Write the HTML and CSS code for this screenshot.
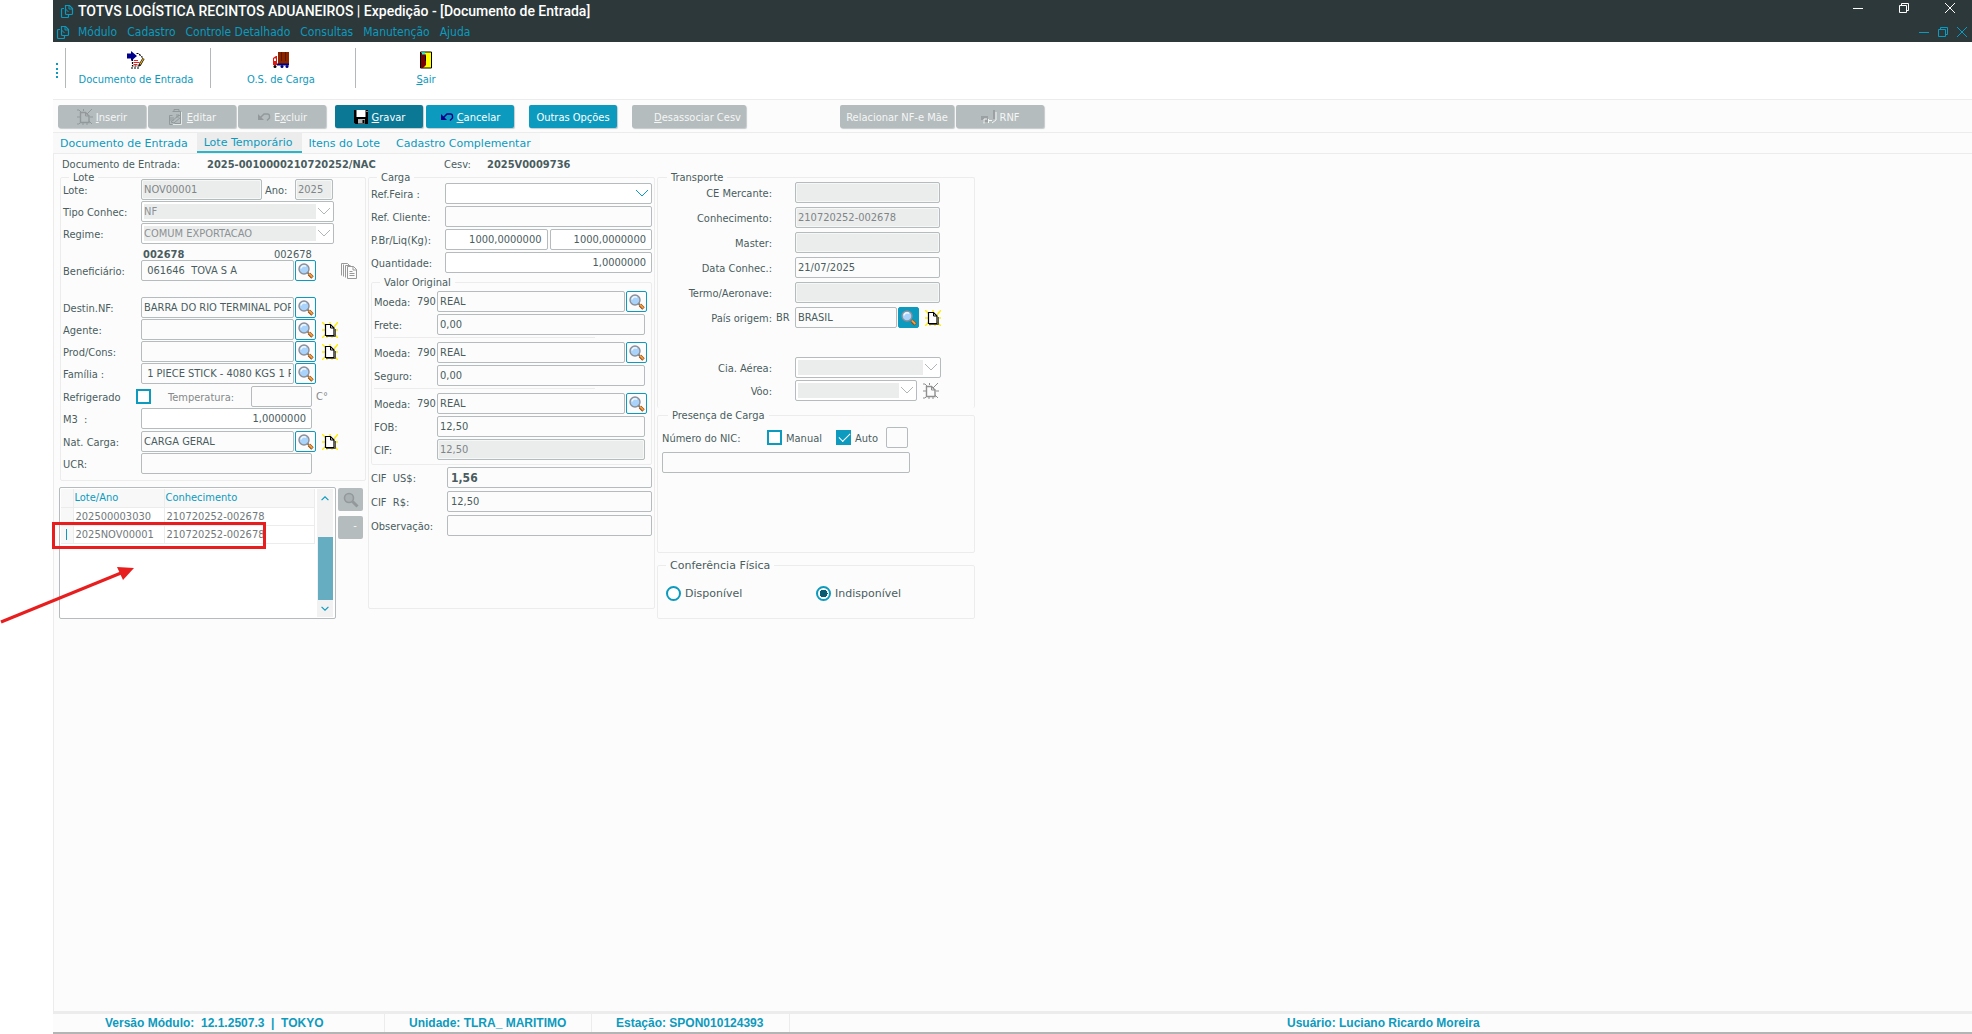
FILE: index.html
```html
<!DOCTYPE html>
<html lang="pt-BR">
<head>
    <meta charset="UTF-8">
    <meta name="viewport" content="width=device-width, initial-scale=1.0">
    <title>TOTVS Logística Recintos Aduaneiros</title>
    <link rel="stylesheet" href="styles.css">
</head>
<body>
    <!-- Icon set -->
    <svg class="icon-defs" width="0" height="0" aria-hidden="true">
        <symbol id="i-app" viewBox="0 0 14 14">
            <path d="M4 4.500H2.500a1 1 0 0 0-1 1v7a1 1 0 0 0 1 1h5a1 1 0 0 0 1-1V11" fill="none" stroke="currentColor" stroke-width="1.200"/>
            <path d="M5.500 1.500h4l3 3v5a1 1 0 0 1-1 1h-5a1 1 0 0 1-1-1z" fill="none" stroke="currentColor" stroke-width="1.200"/>
            <path d="M9 2v3h3M5.500 5l3 3" stroke="currentColor" fill="none"/>
        </symbol>
        <symbol id="i-search" viewBox="0 0 16 16">
            <path d="M9.500 9.500l2 2" stroke="#777" stroke-width="2"/>
            <path d="M11 11l3.500 3.500" stroke="#8a4a1c" stroke-width="3.400"/>
            <path d="M11 10.700l3.300 3.300" stroke="#f5a03c" stroke-width="1.800"/>
            <circle cx="6" cy="6" r="5" fill="#a9d3fa" stroke="#8b8f98" stroke-width="1.400"/>
            <path d="M3 5.500a3 3 0 0 1 5-2" stroke="#eef8ff" stroke-width="1.500" fill="none"/>
        </symbol>
        <symbol id="i-search-off" viewBox="0 0 16 16">
            <path d="M9.500 9.500l5 5" stroke="#93999a" stroke-width="3"/>
            <circle cx="6" cy="6" r="4.500" fill="#aab1b2" stroke="#93999a" stroke-width="1.600"/>
        </symbol>
        <symbol id="i-new" viewBox="0 0 16 16">
            <path d="M0 0l4 4M8 0v3M16 0l-4 5M0 8h4M16 8h-4M0 16l4-4M16 16l-4-4M5 13v3M10 13v3" stroke="#ffee00" stroke-width="1.500"/>
            <path d="M4 14.500h9.500V7" stroke="#555" fill="none"/>
            <path d="M3.500 2.500h5l3.500 3.500v7.500H3.500z" fill="#fff" stroke="#000" stroke-width="1.200"/>
            <path d="M8.500 2.500v3.500H12" fill="none" stroke="#000"/>
        </symbol>
        <symbol id="i-new-off" viewBox="0 0 16 16">
            <path d="M0 1h2l2 2M6.500 0v2M15 0l-5 5M0 8h3M13 8h3M0 15h2l2-2M15 15l-3-3M6 13v3M10 13v3" stroke="currentColor" fill="none"/>
            <path d="M3.500 3.500h5l3.500 3.500v6.500H3.500z" fill="none" stroke="currentColor" stroke-width="1.400"/>
            <path d="M8.500 3v4h4" fill="none" stroke="currentColor"/>
        </symbol>
        <symbol id="i-copy" viewBox="0 0 16 16">
            <path d="M.5 12.500V.5h6l1.500 1.500M2.500 13.500v-12M4.500 14.500v-12h5" fill="none" stroke="#999"/>
            <path d="M6.500 3.500h6l3 3v9h-9z" fill="#fcfcfc" stroke="#999"/>
            <path d="M12 3.500V7h3.500M8.500 8.500h3M8.500 10.500h5M8.500 12.500h5" fill="none" stroke="#999"/>
        </symbol>
        <symbol id="i-edit" viewBox="0 0 16 16">
            <path d="M4.500 15.500h-3v-9h3M4.500 2.500h8v12h-6M6 2V.5h5V2" fill="none" stroke="currentColor"/>
            <path d="M2 9h4M2 11h4M8 6h3M8 8h3M3 13l8-7 2 2-7 6z" fill="none" stroke="currentColor"/>
            <path d="M13.500 3v12.500H5" fill="none" stroke="#e6e9e9"/>
        </symbol>
        <symbol id="i-undo" viewBox="0 0 14 10">
            <path d="M1 2v6h6z" fill="currentColor"/>
            <path d="M3 6l4-4h3a2 2 0 0 1 2.500 2v2L10 8.500" fill="none" stroke="currentColor" stroke-width="1.400"/>
        </symbol>
        <symbol id="i-save" viewBox="0 0 16 16">
            <path d="M1 1h14v14H2.500L1 13.500z" fill="#000"/>
            <path d="M3.500 1h9v7h-9z" fill="#fff"/>
            <path d="M5 10h7v4.500H5z" fill="#b5b5b5"/>
            <path d="M9.500 11h2v3h-2z" fill="#000"/>
            <path d="M13.500 2h1v1h-1z" fill="#fff"/>
        </symbol>
        <symbol id="i-rnf" viewBox="0 0 16 14">
            <path d="M0 6h7v6H2v-2H0z" fill="#9ba1a2"/>
            <path d="M12 0h2v9h-2z" fill="#9ba1a2"/>
            <path d="M3 13.500V9h3M7.500 13V9M7 10.500h4M11 13l4-3V2" fill="none" stroke="#f4f5f5"/>
        </symbol>
        <symbol id="i-doc" viewBox="0 0 18 18">
            <path d="M5.500 3.500h6l4 4v7l-2 1.500h-8z" fill="#fff"/>
            <path d="M9.500 2.500h2l4 4M5.500 8v7h7M12 15l1-3M4 17h9" fill="none" stroke="#000" stroke-width="1.200" stroke-dasharray="2 1"/>
            <path d="M7 9.500h4M6.500 11.500h6M6.500 13.500h4" stroke="#e22"/>
            <path d="M16.500 7.500l-4 7" stroke="#000" stroke-width="2.400"/>
            <path d="M16.500 7.500l-3.500 6" stroke="#e8b020" stroke-width="1.200"/>
            <path d="M0 2.500h4V0l6 5-6 5V7.500H0z" fill="#00008b"/>
        </symbol>
        <symbol id="i-truck" viewBox="0 0 18 18">
            <path d="M6 1h11v12H6z" fill="#8b2500"/>
            <path d="M9.500 1v9M13.500 1v9" stroke="#5c1500"/>
            <path d="M1 7l3-2h1v9H1z" fill="#e8140c"/>
            <path d="M2 7.500h2v2.500H2z" fill="#fff"/>
            <path d="M5 13.500h12" stroke="#000080" stroke-width="2"/>
            <circle cx="3" cy="15.500" r="1.500" fill="#000"/>
            <circle cx="10" cy="15.500" r="1.500" fill="#000080"/>
            <circle cx="15" cy="15.500" r="1.500" fill="#000080"/>
        </symbol>
        <symbol id="i-door" viewBox="0 0 14 18">
            <path d="M1.500 1h11v16h-11z" fill="#ff0" stroke="#000"/>
            <path d="M2 2h3l2 2v10l-3 3H2z" fill="#7b0000"/>
            <path d="M3 1.500h3v2H3z" fill="#0ff"/>
            <path d="M6.500 5v5" stroke="#000"/>
        </symbol>
        <symbol id="i-min" viewBox="0 0 12 12"><path d="M1 6.500h10" stroke="currentColor" fill="none"/></symbol>
        <symbol id="i-max" viewBox="0 0 12 12"><path d="M1.500 3.500h7v7h-7zM3.500 3.500v-2h7v7h-2" stroke="currentColor" fill="none"/></symbol>
        <symbol id="i-close" viewBox="0 0 12 12"><path d="M1 1l10 10M11 1L1 11" stroke="currentColor" fill="none"/></symbol>
        <symbol id="i-chevron" viewBox="0 0 14 8"><path d="M1 1l6 6 6-6" stroke="currentColor" fill="none"/></symbol>
    </svg>

    <div class="window">
        <header class="titlebar">
            <div class="title-row">
                <svg class="app-icon"><use href="#i-app"/></svg>
                <h1>TOTVS LOGÍSTICA RECINTOS ADUANEIROS | Expedição - [Documento de Entrada]</h1>
                <div class="win-buttons">
                    <button type="button" aria-label="Minimizar"><svg><use href="#i-min"/></svg></button>
                    <button type="button" aria-label="Restaurar"><svg><use href="#i-max"/></svg></button>
                    <button type="button" aria-label="Fechar"><svg><use href="#i-close"/></svg></button>
                </div>
            </div>
            <nav class="menu-row">
                <svg class="app-icon"><use href="#i-app"/></svg>
                <a href="#">Módulo</a>
                <a href="#">Cadastro</a>
                <a href="#">Controle Detalhado</a>
                <a href="#">Consultas</a>
                <a href="#">Manutenção</a>
                <a href="#">Ajuda</a>
                <div class="child-buttons">
                    <button type="button" aria-label="Minimizar janela"><svg><use href="#i-min"/></svg></button>
                    <button type="button" aria-label="Restaurar janela"><svg><use href="#i-max"/></svg></button>
                    <button type="button" aria-label="Fechar janela"><svg><use href="#i-close"/></svg></button>
                </div>
            </nav>
        </header>

        <div class="toolbar">
            <span class="grip"></span>
            <button type="button" class="tool"><svg><use href="#i-doc"/></svg>Documento de Entrada</button>
            <button type="button" class="tool"><svg><use href="#i-truck"/></svg>O.S. de Carga</button>
            <button type="button" class="tool"><svg><use href="#i-door"/></svg><span><u>S</u>air</span></button>
        </div>

        <div class="actions">
            <button type="button" class="btn" disabled><svg class="off"><use href="#i-new-off"/></svg><span><u>I</u>nserir</span></button>
            <button type="button" class="btn" disabled><svg class="off"><use href="#i-edit"/></svg><span><u>E</u>ditar</span></button>
            <button type="button" class="btn gap-l" disabled><svg class="off undo"><use href="#i-undo"/></svg><span>E<u>x</u>cluir</span></button>
            <button type="button" class="btn primary"><svg><use href="#i-save"/></svg><span><u>G</u>ravar</span></button>
            <button type="button" class="btn gap-xl"><svg class="undo navy"><use href="#i-undo"/></svg><span><u>C</u>ancelar</span></button>
            <button type="button" class="btn gap-xl">Outras Opções</button>
            <button type="button" class="btn wide indent" disabled><span><u>D</u>esassociar Cesv</span></button>
            <button type="button" class="btn wide far" disabled>Relacionar NF-e Mãe</button>
            <button type="button" class="btn" disabled><svg><use href="#i-rnf"/></svg>RNF</button>
        </div>

        <nav class="tabs">
            <a href="#">Documento de Entrada</a>
            <a href="#" class="active">Lote Temporário</a>
            <a href="#">Itens do Lote</a>
            <a href="#">Cadastro Complementar</a>
        </nav>

        <main class="page">
            <div class="doc-line">
                <span class="doc-label">Documento de Entrada:</span>
                <strong class="doc-number">2025-0010000210720252/NAC</strong>
                <span class="cesv-label">Cesv:</span>
                <strong>2025V0009736</strong>
            </div>

            <form class="columns">
                <div class="col col-lote">
                    <fieldset class="lote">
                        <legend>Lote</legend>
                        <div class="row">
                            <label for="lote">Lote:</label>
                            <input id="lote" class="w-lote" type="text" value="NOV00001" disabled>
                            <label for="ano" class="ano">Ano:</label>
                            <input id="ano" class="w-ano" type="text" value="2025" disabled>
                        </div>
                        <div class="row">
                            <label for="tipo">Tipo Conhec:</label>
                            <span class="combo"><select id="tipo" disabled><option>NF</option></select><svg><use href="#i-chevron"/></svg></span>
                        </div>
                        <div class="row">
                            <label for="regime">Regime:</label>
                            <span class="combo"><select id="regime" disabled><option>COMUM EXPORTACAO</option></select><svg><use href="#i-chevron"/></svg></span>
                        </div>
                        <div class="codes"><strong>002678</strong><span>002678</span></div>
                        <div class="row row-benef">
                            <label for="benef">Beneficiário:</label>
                            <input id="benef" class="w-find" type="text" value=" 061646  TOVA S A">
                            <button type="button" class="find" aria-label="Pesquisar"><svg><use href="#i-search"/></svg></button>
                            <svg class="copy"><use href="#i-copy"/></svg>
                        </div>
                        <div class="row">
                            <label for="destin">Destin.NF:</label>
                            <input id="destin" class="w-find" type="text" value="BARRA DO RIO TERMINAL PORTUARIO">
                            <button type="button" class="find" aria-label="Pesquisar"><svg><use href="#i-search"/></svg></button>
                        </div>
                        <div class="row">
                            <label for="agente">Agente:</label>
                            <input id="agente" class="w-find" type="text">
                            <button type="button" class="find" aria-label="Pesquisar"><svg><use href="#i-search"/></svg></button>
                            <button type="button" class="new" aria-label="Novo"><svg><use href="#i-new"/></svg></button>
                        </div>
                        <div class="row">
                            <label for="prod">Prod/Cons:</label>
                            <input id="prod" class="w-find" type="text">
                            <button type="button" class="find" aria-label="Pesquisar"><svg><use href="#i-search"/></svg></button>
                            <button type="button" class="new" aria-label="Novo"><svg><use href="#i-new"/></svg></button>
                        </div>
                        <div class="row apart">
                            <label for="familia">Família :</label>
                            <input id="familia" class="w-find" type="text" value=" 1 PIECE STICK - 4080 KGS 1 PALLET">
                            <button type="button" class="find" aria-label="Pesquisar"><svg><use href="#i-search"/></svg></button>
                        </div>
                        <div class="row">
                            <label for="refrig" class="refrig">Refrigerado</label>
                            <input id="refrig" type="checkbox">
                            <label for="temp" class="temp">Temperatura:</label>
                            <input id="temp" class="w-temp" type="text">
                            <span class="degree">C°</span>
                        </div>
                        <div class="row apart">
                            <label for="m3">M3 &nbsp;:</label>
                            <input id="m3" class="w-full num" type="text" value="1,0000000">
                        </div>
                        <div class="row">
                            <label for="nat">Nat. Carga:</label>
                            <input id="nat" class="w-find" type="text" value="CARGA GERAL">
                            <button type="button" class="find" aria-label="Pesquisar"><svg><use href="#i-search"/></svg></button>
                            <button type="button" class="new" aria-label="Novo"><svg><use href="#i-new"/></svg></button>
                        </div>
                        <div class="row">
                            <label for="ucr">UCR:</label>
                            <input id="ucr" class="w-full" type="text">
                        </div>
                    </fieldset>

                    <div class="list-area">
                        <div class="list">
                            <table>
                                <thead>
                                    <tr><th class="mark"></th><th class="c-lote">Lote/Ano</th><th>Conhecimento</th></tr>
                                </thead>
                                <tbody>
                                    <tr><td class="mark"></td><td>202500003030</td><td>210720252-002678</td></tr>
                                    <tr><td class="mark"><i></i></td><td>2025NOV00001</td><td>210720252-002678</td></tr>
                                </tbody>
                            </table>
                            <div class="scroll">
                                <svg class="up"><use href="#i-chevron"/></svg>
                                <span class="thumb"></span>
                                <svg><use href="#i-chevron"/></svg>
                            </div>
                        </div>
                        <div class="list-buttons">
                            <button type="button" class="side" aria-label="Pesquisar lote" disabled><svg><use href="#i-search-off"/></svg></button>
                            <button type="button" class="side minus" disabled>-</button>
                        </div>
                        <div class="highlight"></div>
                        <svg class="arrow" viewBox="0 0 136 58"><path d="M1 56L121 7" stroke="#e81e1e" stroke-width="3"/><path d="M117 1l17 1-11 12z" fill="#e81e1e"/></svg>
                    </div>
                </div>

                <fieldset class="carga">
                    <legend>Carga</legend>
                    <div class="row">
                        <label for="feira">Ref.Feira :</label>
                        <span class="combo"><select id="feira"><option></option></select><svg><use href="#i-chevron"/></svg></span>
                    </div>
                    <div class="row">
                        <label for="cliente">Ref. Cliente:</label>
                        <input id="cliente" class="grow" type="text">
                    </div>
                    <div class="row pesos">
                        <label for="bruto">P.Br/Liq(Kg):</label>
                        <input id="bruto" class="grow num" type="text" value="1000,0000000">
                        <input id="liq" class="grow num" type="text" value="1000,0000000" aria-label="Peso líquido">
                    </div>
                    <div class="row">
                        <label for="qtd">Quantidade:</label>
                        <input id="qtd" class="grow num" type="text" value="1,0000000">
                    </div>
                    <fieldset class="valor">
                        <legend>Valor Original</legend>
                        <div class="row">
                            <label for="moeda1">Moeda:</label><span class="code">790</span>
                            <input id="moeda1" class="grow" type="text" value="REAL">
                            <button type="button" class="find" aria-label="Pesquisar"><svg><use href="#i-search"/></svg></button>
                        </div>
                        <div class="row">
                            <label for="frete">Frete:</label><span class="code"></span>
                            <input id="frete" class="grow" type="text" value="0,00">
                        </div>
                        <hr>
                        <div class="row">
                            <label for="moeda2">Moeda:</label><span class="code">790</span>
                            <input id="moeda2" class="grow" type="text" value="REAL">
                            <button type="button" class="find" aria-label="Pesquisar"><svg><use href="#i-search"/></svg></button>
                        </div>
                        <div class="row">
                            <label for="seguro">Seguro:</label><span class="code"></span>
                            <input id="seguro" class="grow" type="text" value="0,00">
                        </div>
                        <hr>
                        <div class="row">
                            <label for="moeda3">Moeda:</label><span class="code">790</span>
                            <input id="moeda3" class="grow" type="text" value="REAL">
                            <button type="button" class="find" aria-label="Pesquisar"><svg><use href="#i-search"/></svg></button>
                        </div>
                        <div class="row">
                            <label for="fob">FOB:</label><span class="code"></span>
                            <input id="fob" class="grow" type="text" value="12,50">
                        </div>
                        <div class="row">
                            <label for="cif">CIF:</label><span class="code"></span>
                            <input id="cif" class="grow" type="text" value="12,50" disabled>
                        </div>
                    </fieldset>
                    <div class="row total">
                        <label for="cifus">CIF &nbsp;US$:</label>
                        <input id="cifus" class="grow strong" type="text" value="1,56">
                    </div>
                    <div class="row total">
                        <label for="cifrs">CIF &nbsp;R$:</label>
                        <input id="cifrs" class="grow" type="text" value="12,50">
                    </div>
                    <div class="row total">
                        <label for="obs">Observação:</label>
                        <input id="obs" class="grow" type="text">
                    </div>
                </fieldset>

                <div class="col col-transp">
                    <fieldset class="transporte">
                        <legend>Transporte</legend>
                        <div class="row">
                            <label for="ce">CE Mercante:</label><span class="pais"></span>
                            <input id="ce" class="w-transp" type="text" disabled>
                        </div>
                        <div class="row">
                            <label for="conhec">Conhecimento:</label><span class="pais"></span>
                            <input id="conhec" class="w-transp" type="text" value="210720252-002678" disabled>
                        </div>
                        <div class="row">
                            <label for="master">Master:</label><span class="pais"></span>
                            <input id="master" class="w-transp" type="text" disabled>
                        </div>
                        <div class="row">
                            <label for="data">Data Conhec.:</label><span class="pais"></span>
                            <input id="data" class="w-transp" type="text" value="21/07/2025">
                        </div>
                        <div class="row">
                            <label for="termo">Termo/Aeronave:</label><span class="pais"></span>
                            <input id="termo" class="w-transp" type="text" disabled>
                        </div>
                        <div class="row row-pais">
                            <label for="pais">País origem:</label><span class="pais">BR</span>
                            <input id="pais" class="w-pais" type="text" value="BRASIL">
                            <button type="button" class="find on" aria-label="Pesquisar"><svg><use href="#i-search"/></svg></button>
                            <button type="button" class="new" aria-label="Novo"><svg><use href="#i-new"/></svg></button>
                        </div>
                        <div class="row tight">
                            <label for="cia">Cia. Aérea:</label><span class="pais"></span>
                            <span class="combo w-cia"><select id="cia" disabled><option></option></select><svg><use href="#i-chevron"/></svg></span>
                        </div>
                        <div class="row tight">
                            <label for="voo">Vôo:</label><span class="pais"></span>
                            <span class="combo w-voo"><select id="voo" disabled><option></option></select><svg><use href="#i-chevron"/></svg></span>
                            <button type="button" class="new off" aria-label="Novo vôo" disabled><svg><use href="#i-new-off"/></svg></button>
                        </div>
                    </fieldset>

                    <fieldset class="presenca">
                        <legend>Presença de Carga</legend>
                        <div class="row">
                            <label for="nic" class="nic-label">Número do NIC:</label>
                            <input id="manual" type="checkbox"><label for="manual" class="manual">Manual</label>
                            <input id="auto" type="checkbox" checked><label for="auto" class="auto">Auto</label>
                            <input class="w-mini" type="text" aria-label="Tipo NIC">
                        </div>
                        <input id="nic" class="w-nic" type="text">
                    </fieldset>

                    <fieldset class="conferencia">
                        <legend>Conferência Física</legend>
                        <label><input type="radio" name="conf"> Disponível</label>
                        <label><input type="radio" name="conf" checked> Indisponível</label>
                    </fieldset>
                </div>
            </form>
        </main>

        <footer class="status">
            <span class="s-versao">Versão Módulo: &nbsp;12.1.2507.3 &nbsp;| &nbsp;TOKYO</span>
            <span class="s-unidade">Unidade: TLRA_ MARITIMO</span>
            <span class="s-estacao">Estação: SPON010124393</span>
            <span class="s-usuario">Usuário: Luciano Ricardo Moreira</span>
        </footer>
    </div>
</body>
</html>
```
FILE: styles.css
```css
* {
    margin: 0;
    padding: 0;
    box-sizing: border-box;
}

:root {
    --teal: #0c9abe;
    --text: #4a5c60;
    --line: #ececec;
    --edge: #b4bcbe;
    --off: #ebeded;
    --paper: #fcfcfc;
}

body {
    background: #fff;
    color: var(--text);
    font-family: "DejaVu Sans Condensed", "DejaVu Sans", sans-serif;
    font-size: 11px;
    font-stretch: condensed;
}

button, input, select {
    font: inherit;
    color: inherit;
}

button {
    border: none;
    background: none;
}

a {
    color: var(--teal);
    text-decoration: none;
}

.icon-defs {
    position: absolute;
}

.window {
    min-height: 100vh;
    margin-left: 53px;
    display: flex;
    flex-direction: column;
    background: #fff;
}

/* Title and menu */
.titlebar {
    background: #2d383a;
    color: var(--teal);
    height: 42px;
}

.title-row, .menu-row {
    display: flex;
    align-items: center;
    height: 21px;
    padding-left: 7px;
}

.menu-row {
    padding-left: 3px;
    gap: 10px;
    font-size: 12px;
}

.menu-row .app-icon {
    margin-right: -2px;
}

.app-icon {
    width: 14px;
    height: 14px;
}

h1 {
    margin-left: 4px;
    font: 500 14px Roboto, "Noto Sans", sans-serif;
    color: #fff;
}

.win-buttons, .child-buttons {
    margin-left: auto;
    display: flex;
}

.win-buttons {
    color: #fff;
    gap: 34px;
    padding: 0 16px 6px 0;
}

.child-buttons {
    color: var(--teal);
    gap: 7px;
    padding-right: 4px;
}

.win-buttons button, .child-buttons button {
    width: 12px;
    height: 12px;
    color: inherit;
}

.win-buttons svg, .child-buttons svg {
    display: block;
    width: 12px;
    height: 12px;
}

/* Toolbar */
.toolbar {
    display: flex;
    align-items: flex-start;
    height: 58px;
    padding: 6px 0 0 3px;
    border-bottom: 1px solid var(--line);
}

.grip {
    width: 9px;
    height: 15px;
    margin-top: 15px;
    border-left: 2px dotted var(--teal);
}

.tool {
    display: flex;
    flex-direction: column;
    align-items: center;
    gap: 4px;
    width: 145px;
    height: 40px;
    padding: 3px 4px 0 0;
    border-left: 1px solid #b4b8b8;
    color: var(--teal);
}

.tool svg {
    width: 18px;
    height: 18px;
}

/* Action buttons */
.actions {
    display: flex;
    gap: 2px;
    height: 33px;
    padding: 5px 0 0 5px;
    background: var(--paper);
    border-bottom: 1px solid var(--line);
}

.btn {
    display: flex;
    align-items: center;
    justify-content: center;
    gap: 3px;
    width: 88px;
    height: 23px;
    padding-top: 1px;
    border-radius: 2px;
    background: var(--teal);
    box-shadow: 1px 1px 1px #c4cacb;
    color: #fff;
    white-space: nowrap;
}

.btn:disabled {
    background: #b4bcbd;
    color: #f5f6f6;
}

.btn svg {
    width: 16px;
    height: 16px;
}

.btn svg.off {
    color: #93999a;
}

.btn svg.undo {
    width: 14px;
    height: 10px;
}

.btn svg.navy {
    color: #00008b;
}

.btn.primary {
    margin-right: 1px;
    background: #0b7896;
}

.btn.gap-l {
    margin-right: 7px;
}

.btn.gap-xl {
    margin-right: 13px;
}

.btn.wide {
    width: 114px;
}

.btn.indent {
    padding-left: 17px;
}

.btn.far {
    margin-left: 92px;
}

/* Tabs */
.tabs {
    display: flex;
    height: 21px;
    background: var(--paper);
    border-bottom: 1px solid var(--line);
    font-family: "DejaVu Sans", sans-serif;
    font-stretch: normal;
    font-size: 11px;
    line-height: 22px;
}

.tabs a {
    padding: 0 9px 0 7px;
    background: #f9f9f9;
}

.tabs .active {
    background: #ececec;
    border-bottom: 2px solid #2ab5c8;
    line-height: 20px;
}

/* Form page */
.page {
    flex: 1;
    background: var(--paper);
    border-left: 1px solid var(--line);
}

.doc-line {
    display: flex;
    align-items: center;
    height: 21px;
    padding-left: 8px;
}

.doc-label {
    width: 145px;
}

.doc-number {
    width: 237px;
}

.cesv-label {
    width: 43px;
}

.columns {
    display: flex;
    align-items: flex-start;
    gap: 2px;
    padding-left: 5px;
}

fieldset {
    border: 1px solid var(--line);
    border-radius: 2px;
    min-width: 0;
}

legend {
    height: 4px;
    margin-left: 6px;
    padding: 0 4px;
    line-height: 6px;
}

.row {
    display: flex;
    align-items: center;
    height: 21px;
    margin-bottom: 1px;
}

.row label {
    flex: none;
    padding-top: 1px;
    white-space: nowrap;
}

input[type="text"], select {
    height: 21px;
    border: 1px solid var(--edge);
    border-radius: 2px;
    background: var(--paper);
    padding: 0 2px;
    min-width: 0;
    outline: none;
}

input[type="text"]:disabled {
    background: var(--off);
    box-shadow: inset 0 0 0 1px #f6f7f7;
    color: #7f8587;
}

.num {
    text-align: right;
}

input.num {
    padding-right: 5px;
    background: #fff;
}

.grow {
    flex: 1;
}

.combo {
    position: relative;
    flex: 1;
    display: flex;
}

.combo select {
    flex: 1;
    appearance: none;
    background: #fff;
    opacity: 1;
}

.combo select:disabled {
    padding: 2px 17px 2px 2px;
    background: linear-gradient(var(--off), var(--off)) content-box, #fff;
    color: #8b9193;
}

.combo svg {
    position: absolute;
    right: 3px;
    top: 6px;
    width: 14px;
    height: 8px;
    color: var(--teal);
    pointer-events: none;
}

.combo select:disabled + svg {
    color: #b0b6b7;
}

.find {
    flex: none;
    display: flex;
    align-items: center;
    justify-content: center;
    width: 21px;
    height: 21px;
    margin-left: 1px;
    border: 1px solid var(--teal);
    border-radius: 2px;
    background: var(--paper);
}

.find.on {
    background: var(--teal);
}

.find svg, .new svg, .side svg, .copy {
    display: block;
    width: 16px;
    height: 16px;
}

.new {
    flex: none;
    margin-left: 6px;
}

.new.off {
    color: #8f8f8f;
}

input[type="checkbox"] {
    flex: none;
    appearance: none;
    width: 15px;
    height: 15px;
    border: 2px solid var(--teal);
    background: #fff;
}

input[type="checkbox"]:checked {
    background: var(--teal);
}

input[type="checkbox"]:checked::after {
    content: "";
    display: block;
    width: 10px;
    height: 5px;
    margin: 1px 0 0 1px;
    border: solid #fff;
    border-width: 0 0 1px 1px;
    transform: rotate(-45deg);
}

/* Lote */
.lote {
    width: 306px;
    min-height: 306px;
    margin-left: 1px;
    padding-left: 2px;
}

.lote .row > label:first-child {
    width: 78px;
}

.lote .row > label.refrig:first-child {
    width: 73px;
}

.lote .combo {
    flex: none;
    width: 193px;
}

.lote .apart {
    margin-bottom: 2px;
}

.w-lote {
    width: 121px;
}

.ano {
    width: 33px;
    padding-left: 3px;
}

.w-ano {
    width: 38px;
}

.codes {
    display: flex;
    align-items: center;
    height: 15px;
    padding: 4px 0 0 80px;
}

.codes strong {
    width: 131px;
}

.lote .row-benef {
    margin-bottom: 16px;
}

.w-find {
    width: 153px;
}

.copy {
    margin-left: 25px;
}

.temp {
    width: 100px;
    padding-left: 17px;
    color: #84898a;
}

.w-temp {
    width: 61px;
}

.degree {
    margin-left: 4px;
    color: #84898a;
}

.w-full {
    width: 171px;
}

/* Lot list */
.list-area {
    position: relative;
    display: flex;
    gap: 2px;
    margin-top: 6px;
}

.list {
    display: flex;
    align-items: flex-start;
    width: 277px;
    height: 132px;
    padding: 1px;
    border: 1px solid var(--edge);
    border-radius: 2px;
    background: #fff;
}

table {
    width: 254px;
    border-collapse: collapse;
    table-layout: fixed;
    color: #73797b;
}

th, td {
    height: 18px;
    padding-left: 2px;
    border: solid var(--line);
    border-width: 0 1px 1px 0;
    text-align: left;
    font-weight: normal;
    line-height: 17px;
}

th {
    padding-left: 1px;
    background: #f8f8f8;
    color: var(--teal);
}

.mark {
    width: 12px;
    padding: 0;
    background: #f8f8f8;
}

.mark i {
    display: block;
    width: 1px;
    height: 11px;
    margin-left: 5px;
    background: var(--teal);
}

.c-lote {
    width: 91px;
}

.scroll {
    display: flex;
    flex-direction: column;
    align-items: center;
    width: 16px;
    height: 128px;
    margin-left: 2px;
    padding: 7px 0 6px;
    background: #f2f2f2;
    color: var(--teal);
}

.scroll svg {
    flex: none;
    width: 8px;
    height: 5px;
    stroke-width: 2;
}

.scroll .up {
    transform: rotate(180deg);
}

.thumb {
    width: 15px;
    height: 63px;
    margin: auto 0 6px;
    background: #67adc1;
}

.list-buttons {
    display: flex;
    flex-direction: column;
    gap: 5px;
    padding-top: 1px;
}

.side {
    display: flex;
    align-items: center;
    justify-content: center;
    width: 25px;
    height: 23px;
    border-radius: 2px;
    background: #b4bcbd;
    color: #f5f6f6;
}

.minus {
    padding: 0 0 5px 9px;
}

.highlight {
    position: absolute;
    left: -7px;
    top: 35px;
    width: 214px;
    height: 27px;
    border: 3px solid #e81e1e;
}

.arrow {
    position: absolute;
    left: -59px;
    top: 79px;
    width: 136px;
    height: 58px;
}

/* Carga */
.carga {
    width: 287px;
    min-height: 434px;
    padding: 4px 2px 0;
}

.carga .row {
    margin-bottom: 2px;
}

.carga .row label {
    width: 74px;
}

.pesos {
    gap: 2px;
}

.carga .pesos label {
    width: 72px;
}

.valor {
    margin: 7px 0 2px;
    padding: 7px 4px 2px 2px;
}

.carga .valor .row label {
    width: 43px;
}

.valor .code {
    width: 20px;
}

.valor .grow:last-child {
    margin-right: 2px;
}

.valor hr {
    width: 221px;
    margin: 2px 0 4px;
    border: none;
    border-top: 1px solid var(--line);
}

.carga .total {
    margin-bottom: 3px;
}

.carga .total label {
    width: 76px;
}

.total input {
    padding-left: 3px;
}

.strong {
    font-weight: bold;
    font-size: 12px;
}

/* Transporte */
.transporte {
    width: 318px;
    min-height: 233px;
    padding-top: 3px;
    border-bottom: none;
}

.transporte legend {
    margin-left: 9px;
}

.transporte .row {
    margin-bottom: 4px;
}

.transporte .row-pais {
    margin-bottom: 29px;
}

.transporte .tight {
    margin-bottom: 2px;
}

.transporte .row label {
    width: 114px;
    text-align: right;
}

.pais {
    width: 23px;
    padding-left: 4px;
}

.w-transp {
    width: 145px;
}

.w-pais {
    width: 102px;
}

.transporte .w-cia {
    flex: none;
    width: 146px;
}

.transporte .w-voo {
    flex: none;
    width: 122px;
}

.presenca {
    width: 318px;
    min-height: 140px;
    margin-top: 5px;
    padding: 10px 4px 0;
}

.presenca .row {
    margin-bottom: 4px;
}

.nic-label {
    width: 105px;
}

.manual {
    width: 54px;
    padding-left: 4px;
}

.auto {
    width: 35px;
    padding-left: 4px;
}

.w-mini {
    width: 22px;
}

.w-nic {
    width: 248px;
}

.conferencia {
    display: flex;
    width: 318px;
    min-height: 56px;
    margin-top: 10px;
    padding: 18px 8px 0;
    font-family: "DejaVu Sans", sans-serif;
    font-stretch: normal;
}

.conferencia legend {
    margin-left: 0;
}

.conferencia label {
    display: flex;
    align-items: center;
    gap: 4px;
    width: 154px;
    height: 17px;
}

input[type="radio"] {
    appearance: none;
    width: 15px;
    height: 15px;
    border: 2px solid var(--teal);
    border-radius: 50%;
    background: #fff;
}

input[type="radio"]:checked {
    background: radial-gradient(#075a70 4px, #fff 4px);
}

/* Status bar */
.status {
    display: flex;
    height: 23px;
    border-top: 3px solid var(--line);
    border-bottom: 2px solid #b4b4b4;
    background: var(--paper);
    color: var(--teal);
    font: bold 12px/18px "Liberation Sans", sans-serif;
}

.status span {
    padding-left: 24px;
    border-right: 1px solid var(--line);
}

.status .s-versao {
    width: 332px;
    padding-left: 52px;
}

.s-unidade {
    width: 207px;
}

.s-estacao {
    width: 198px;
}

.status .s-usuario {
    flex: 1;
    padding-left: 497px;
    border-right: none;
}
```
